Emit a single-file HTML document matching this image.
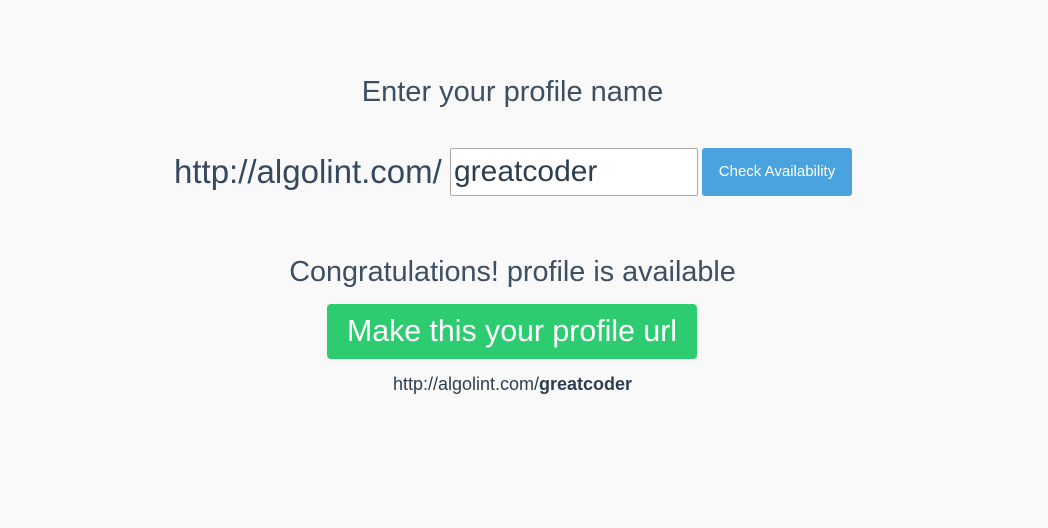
<!DOCTYPE html>
<html><head><style>
body{margin:0;width:1048px;height:528px;background:#f9f9f9;font-family:"Liberation Sans",sans-serif;color:#34495e;position:relative;overflow:hidden}
.a{position:absolute;white-space:nowrap}
</style></head><body>
<div class="a" style="left:0;width:1025px;top:76px;text-align:center;font-size:29px;color:#3d4f63">Enter your profile name</div>
<div class="a" style="left:174px;top:154px;font-size:33px;line-height:36px">http://algolint.com/</div>
<div class="a" style="left:450px;top:148px;width:248px;height:48px;background:#fff;border:1px solid #aaa;border-radius:2px;box-sizing:border-box"></div>
<div class="a" style="left:454px;top:154px;font-size:30px;line-height:36px;color:#2c3e50">greatcoder</div>
<div class="a" style="left:702px;top:148px;width:150px;height:48px;background:#4aa3df;border-radius:3px;color:#fff;font-size:15px;line-height:48px;text-align:center">Check Availability</div>
<div class="a" style="left:0;width:1025px;top:256px;text-align:center;font-size:28.8px;color:#3d4f63">Congratulations! profile is available</div>
<div class="a" style="left:327px;top:304px;width:370px;height:55px;background:#2ecc71;border-radius:4px;color:#fff;font-size:30.3px;line-height:55px;text-align:center">Make this your profile url</div>
<div class="a" style="left:0;width:1025px;top:374px;text-align:center;font-size:18px;color:#2c3e50">http://algolint.com/<b>greatcoder</b></div>
</body></html>
